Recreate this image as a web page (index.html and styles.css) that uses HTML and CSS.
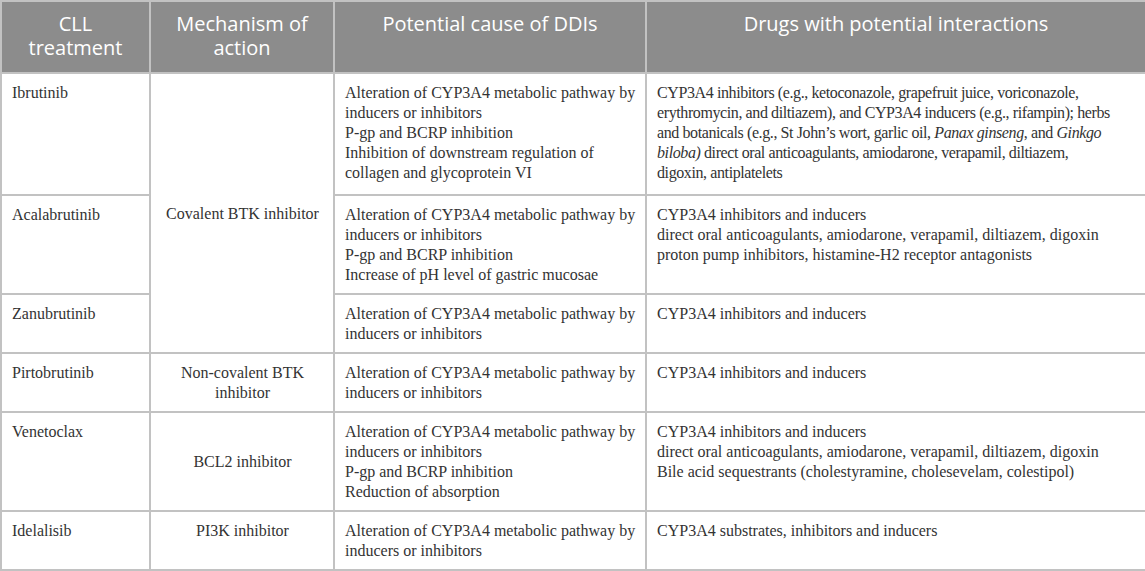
FILE: index.html
```html
<!DOCTYPE html>
<html lang="en">
<head>
  <meta charset="UTF-8" />
  <title>CLL treatment drug interactions</title>
  <link rel="stylesheet" href="styles.css">
</head>
<body>
  <table class="ddi">
    <colgroup>
      <col class="c1">
      <col class="c2">
      <col class="c3">
      <col class="c4">
    </colgroup>
    <thead>
      <tr>
        <th>CLL treatment</th>
        <th>Mechanism of action</th>
        <th>Potential cause of DDIs</th>
        <th>Drugs with potential interactions</th>
      </tr>
    </thead>
    <tbody>
      <tr class="tall">
        <td>Ibrutinib</td>
        <td class="mech open-bottom"></td>
        <td>Alteration of CYP3A4 metabolic pathway by inducers or inhibitors<br>P-gp and BCRP inhibition<br>Inhibition of downstream regulation of collagen and glycoprotein VI</td>
        <td class="dense">CYP3A4 inhibitors (e.g., ketoconazole, grapefruit juice, voriconazole,<br>erythromycin, and diltiazem), and CYP3A4 inducers (e.g., rifampin); herbs<br>and botanicals (e.g., St John’s wort, garlic oil, <i>Panax ginseng</i>, and <i>Ginkgo</i><br><i>biloba)</i> direct oral anticoagulants, amiodarone, verapamil, diltiazem,<br>digoxin, antiplatelets</td>
      </tr>
      <tr>
        <td>Acalabrutinib</td>
        <td class="mech open-top open-bottom">Covalent BTK inhibitor</td>
        <td>Alteration of CYP3A4 metabolic pathway by inducers or inhibitors<br>P-gp and BCRP inhibition<br>Increase of pH level of gastric mucosae</td>
        <td>CYP3A4 inhibitors and inducers<br>direct oral anticoagulants, amiodarone, verapamil, diltiazem, digoxin<br>proton pump inhibitors, histamine-H2 receptor antagonists</td>
      </tr>
      <tr>
        <td>Zanubrutinib</td>
        <td class="mech open-top"></td>
        <td>Alteration of CYP3A4 metabolic pathway by inducers or inhibitors</td>
        <td>CYP3A4 inhibitors and inducers</td>
      </tr>
      <tr>
        <td>Pirtobrutinib</td>
        <td class="mech">Non-covalent BTK inhibitor</td>
        <td>Alteration of CYP3A4 metabolic pathway by inducers or inhibitors</td>
        <td>CYP3A4 inhibitors and inducers</td>
      </tr>
      <tr>
        <td>Venetoclax</td>
        <td class="mech middle">BCL2 inhibitor</td>
        <td>Alteration of CYP3A4 metabolic pathway by inducers or inhibitors<br>P-gp and BCRP inhibition<br>Reduction of absorption</td>
        <td>CYP3A4 inhibitors and inducers<br>direct oral anticoagulants, amiodarone, verapamil, diltiazem, digoxin<br>Bile acid sequestrants (cholestyramine, cholesevelam, colestipol)</td>
      </tr>
      <tr>
        <td>Idelalisib</td>
        <td class="mech">PI3K inhibitor</td>
        <td>Alteration of CYP3A4 metabolic pathway by inducers or inhibitors</td>
        <td>CYP3A4 substrates, inhibitors and inducers</td>
      </tr>
    </tbody>
  </table>
</body>
</html>
```

FILE: styles.css
```css
* {
  box-sizing: border-box;
}

body {
  margin: 0;
  background: #ffffff;
  font-family: "Liberation Serif", "Times New Roman", serif;
  color: #333333;
}

.ddi {
  width: 1145px;
  border-collapse: collapse;
  table-layout: fixed;
}

.c1 { width: 149px; }
.c2 { width: 184px; }
.c3 { width: 312px; }
.c4 { width: 500px; }

.ddi th,
.ddi td {
  border: 2px solid #c2c2c2;
}

.ddi th {
  background: #8c8c8c;
  color: #ffffff;
  font-family: "Open Sans", "Noto Sans", sans-serif;
  font-weight: 400;
  font-size: 20px;
  line-height: 24px;
  text-align: center;
  vertical-align: top;
  padding: 10px 10px 12px;
  height: 70px;
}

.ddi td {
  font-size: 16px;
  line-height: 20px;
  vertical-align: top;
  text-align: left;
  padding: 9px 9px 8px 10px;
}

.ddi tr.tall td {
  padding-bottom: 11px;
}

.ddi td.dense {
  letter-spacing: -0.4px;
  padding-right: 4px;
}

.ddi td.mech {
  text-align: center;
}

.ddi td.middle {
  vertical-align: middle;
}

.ddi td.open-bottom {
  border-bottom-style: hidden;
}

.ddi td.open-top {
  border-top-style: hidden;
}
```
